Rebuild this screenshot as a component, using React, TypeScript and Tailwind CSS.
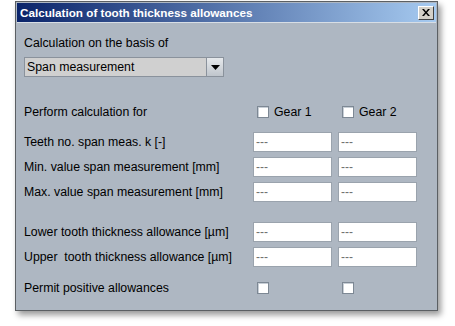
import { useState } from "react";

const font = { fontFamily: '"Liberation Sans", Arial, sans-serif' };

function CheckBox() {
  return (
    <span className="block h-[12px] w-[12px] shrink-0 border border-[#7d8894] bg-white shadow-[inset_1px_1px_0_#c7ced6]" />
  );
}

function Field() {
  return (
    <div className="flex h-[20px] w-[79px] items-center border border-[#9aa3ad] bg-white pl-[2px] text-[12px] text-[#707070]">
      ---
    </div>
  );
}

function FieldRow({ label }: { label: string }) {
  return (
    <div className="flex h-[20px] items-center">
      <span className="w-[229px] text-[12.3px] text-black">{label}</span>
      <div className="flex gap-[6px]">
        <Field />
        <Field />
      </div>
    </div>
  );
}

export default function App() {
  const [basis] = useState("Span measurement");
  return (
    <div className="h-[326px] w-[455px] bg-white" style={font}>
      <div className="ml-[15px] pt-[1px]">
        <div className="w-[423px] border border-[#5b5f63] bg-[#aeb7c2] p-px shadow-[3px_4px_6px_rgba(0,0,0,0.4)]">
          {/* title bar */}
          <div className="flex h-[19px] items-center justify-between bg-[linear-gradient(90deg,#0a246a,#a6caf0)] pl-[3px] pr-[2px]">
            <span className="text-[11.7px] font-bold text-white">
              Calculation of tooth thickness allowances
            </span>
            <span className="flex h-[14px] w-[16px] items-center justify-center border border-t-white border-l-white border-b-[#404040] border-r-[#404040] bg-[#d4d0c8]">
              <svg width="8" height="7" viewBox="0 0 8 7">
                <path d="M0 0h2l2 2.5L6 0h2L5 3.5 8 7H6L4 4.5 2 7H0l3-3.5z" fill="#000" />
              </svg>
            </span>
          </div>
          <div className="h-px bg-[#d8dee5]" />

          <div className="flex flex-col pl-[7px] pr-[6px] pb-[11px]">
            <div className="mt-[12px] h-[16px] text-[12.3px] leading-[16px] text-black">
              Calculation on the basis of
            </div>
            <div className="mt-[6px] flex h-[20px] w-[200px] border border-[#8a929c] bg-[#d0d0d0]">
              <span className="flex-1 pl-[2px] text-[12.3px] leading-[18px] text-black">{basis}</span>
              <span className="flex w-[17px] items-center justify-center border-l border-[#8a929c] bg-[linear-gradient(180deg,#e6e9ec,#bfc5cc)]">
                <svg width="9" height="5" viewBox="0 0 9 5">
                  <path d="M0 0h9L4.5 5z" fill="#000" />
                </svg>
              </span>
            </div>

            <div className="mt-[25px] flex h-[20px] items-center">
              <span className="w-[229px] text-[12.3px] text-black">Perform calculation for</span>
              <div className="flex w-[85px] items-center gap-[5px] pl-[4px]">
                <CheckBox />
                <span className="text-[12.3px] text-black">Gear 1</span>
              </div>
              <div className="flex items-center gap-[5px] pl-[4px]">
                <CheckBox />
                <span className="text-[12.3px] text-black">Gear 2</span>
              </div>
            </div>

            <div className="mt-[10px] flex flex-col gap-[5px]">
              <FieldRow label="Teeth no. span meas. k [-]" />
              <FieldRow label="Min. value span measurement [mm]" />
              <FieldRow label="Max. value span measurement [mm]" />
            </div>

            <div className="mt-[20px] flex flex-col gap-[5px]">
              <FieldRow label="Lower tooth thickness allowance [µm]" />
              <FieldRow label={"Upper\u00a0 tooth thickness allowance [µm]"} />
            </div>

            <div className="mt-[11px] flex h-[20px] items-center">
              <span className="w-[229px] text-[12.3px] text-black">Permit positive allowances</span>
              <div className="w-[85px] pl-[4px]">
                <CheckBox />
              </div>
              <div className="pl-[4px]">
                <CheckBox />
              </div>
            </div>
          </div>
        </div>
      </div>
    </div>
  );
}
